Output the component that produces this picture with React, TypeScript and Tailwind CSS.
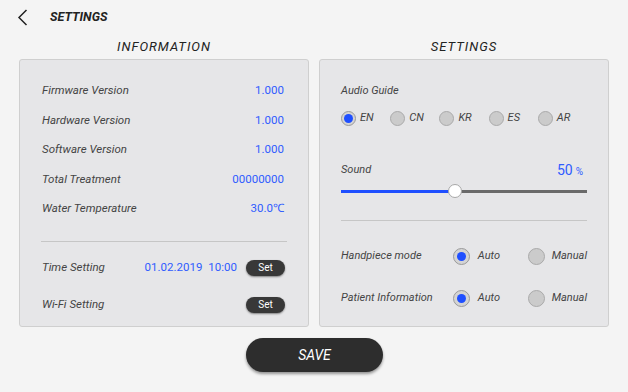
import React from 'react';

const infoRows = [
  { label: 'Firmware Version', value: '1.000' },
  { label: 'Hardware Version', value: '1.000' },
  { label: 'Software Version', value: '1.000' },
  { label: 'Total Treatment', value: '00000000' },
  { label: 'Water Temperature', value: '30.0℃' },
];

const languages = ['EN', 'CN', 'KR', 'ES', 'AR'];

function Radio({ checked, size = 15 }: { checked?: boolean; size?: number }) {
  return (
    <span
      className={`flex shrink-0 items-center justify-center rounded-full border ${
        checked ? 'border-[#9a9a9a] bg-[#d4d4d4]' : 'border-[#aaaaaa] bg-[#cbcbcb]'
      }`}
      style={{ width: size, height: size }}
    >
      {checked && <span className="h-[9px] w-[9px] rounded-full bg-[#1f4fff]" />}
    </span>
  );
}

function SetButton() {
  return (
    <button className="flex h-4 w-[39px] items-center justify-center rounded-full bg-[#383838] text-[10px] text-white shadow-[0_1px_2px_rgba(0,0,0,0.45)]">
      Set
    </button>
  );
}

function ModeRow({ label }: { label: string }) {
  return (
    <div className="flex h-[42px] items-center text-[11px] italic text-[#444]">
      <span className="w-[112px]">{label}</span>
      <span className="flex w-[75px] items-center gap-[8px]">
        <Radio checked size={17} />
        Auto
      </span>
      <span className="flex items-center gap-[7px]">
        <Radio size={17} />
        Manual
      </span>
    </div>
  );
}

export default function App() {
  return (
    <div className="flex h-[392px] w-[628px] flex-col bg-[#f4f4f4] font-['Roboto',sans-serif] text-[#333]">
      {/* Header */}
      <div className="flex h-[34px] items-center pl-[17px]">
        <svg width="11" height="17" viewBox="0 0 11 17" fill="none">
          <path d="M9.5 1 L2 8.5 L9.5 16" stroke="#222" strokeWidth="1.5" />
        </svg>
        <span className="ml-[22px] text-[12.5px] font-bold italic text-[#222]">SETTINGS</span>
      </div>

      <div className="flex gap-[10px] pl-[19px]">
        {/* Information */}
        <div className="flex w-[290px] flex-col">
          <div className="flex h-[25px] items-center justify-center text-[13px] italic tracking-[1px] text-[#222]">
            INFORMATION
          </div>
          <div className="h-[268px] rounded-[3px] border border-[#cfcfcf] bg-[#e6e6e8] pt-[16px]">
            {infoRows.map((r) => (
              <div key={r.label} className="flex h-[29.5px] items-center justify-between pl-[22px] pr-[24px]">
                <span className="text-[11.5px] italic text-[#444]">{r.label}</span>
                <span className="text-[11.5px] text-[#2f5cff]">{r.value}</span>
              </div>
            ))}
            <div className="mx-[21px] mt-[17px] h-px bg-[#c6c6c6]" />
            <div className="mt-[18px] flex h-[16px] items-center pl-[22px] pr-[23px]">
              <span className="flex-1 text-[11.5px] italic text-[#444]">Time Setting</span>
              <span className="mr-[9px] flex gap-[6px] text-[11.5px] text-[#2f5cff]">
                <span>01.02.2019</span>
                <span>10:00</span>
              </span>
              <SetButton />
            </div>
            <div className="mt-[21px] flex h-[16px] items-center pl-[22px] pr-[23px]">
              <span className="flex-1 text-[11.5px] italic text-[#444]">Wi-Fi Setting</span>
              <SetButton />
            </div>
          </div>
        </div>

        {/* Settings */}
        <div className="flex w-[290px] flex-col">
          <div className="flex h-[25px] items-center justify-center text-[13px] italic tracking-[1px] text-[#222]">
            SETTINGS
          </div>
          <div className="h-[268px] rounded-[3px] border border-[#cfcfcf] bg-[#e6e6e8] pl-[21px] pr-[21px] pt-[23px]">
            <div className="h-[16px] text-[11px] italic leading-[16px] text-[#444]">Audio Guide</div>
            <div className="mt-[11px] flex h-[16px] items-center">
              {languages.map((l, i) => (
                <span key={l} className="flex w-[51.5px] items-center gap-[4px] text-[11px] italic text-[#444]">
                  <Radio checked={i === 0} />
                  {l}
                </span>
              ))}
            </div>
            <div className="mt-[36px] flex h-[16px] items-center justify-between">
              <span className="text-[11px] italic text-[#444]">Sound</span>
              <span className="mr-[4px] flex items-baseline gap-[3px] text-[#2f5cff]">
                <span className="text-[14px]">50</span>
                <span className="text-[10px]">%</span>
              </span>
            </div>
            <div className="relative mt-[6px] flex h-[14px] items-center">
              <div className="h-[3px] w-[46.5%] bg-[#1f4fff]" />
              <div className="h-[3px] flex-1 bg-[#6a6a6a]" />
              <span
                className="absolute top-0 h-[14px] w-[14px] -translate-x-1/2 rounded-full border border-[#a8a8a8] bg-white"
                style={{ left: '46.5%' }}
              />
            </div>
            <div className="mt-[22px] h-px bg-[#c6c6c6]" />
            <div className="mt-[14px]">
              <ModeRow label="Handpiece mode" />
              <ModeRow label="Patient Information" />
            </div>
          </div>
        </div>
      </div>

      {/* Save */}
      <div className="flex justify-center pl-[1px] pt-[11px]">
        <button className="flex h-[34px] w-[137px] items-center justify-center rounded-full bg-[#2d2d2d] text-[14px] italic text-white shadow-[0_2px_3px_rgba(0,0,0,0.4)]">
          SAVE
        </button>
      </div>
    </div>
  );
}
